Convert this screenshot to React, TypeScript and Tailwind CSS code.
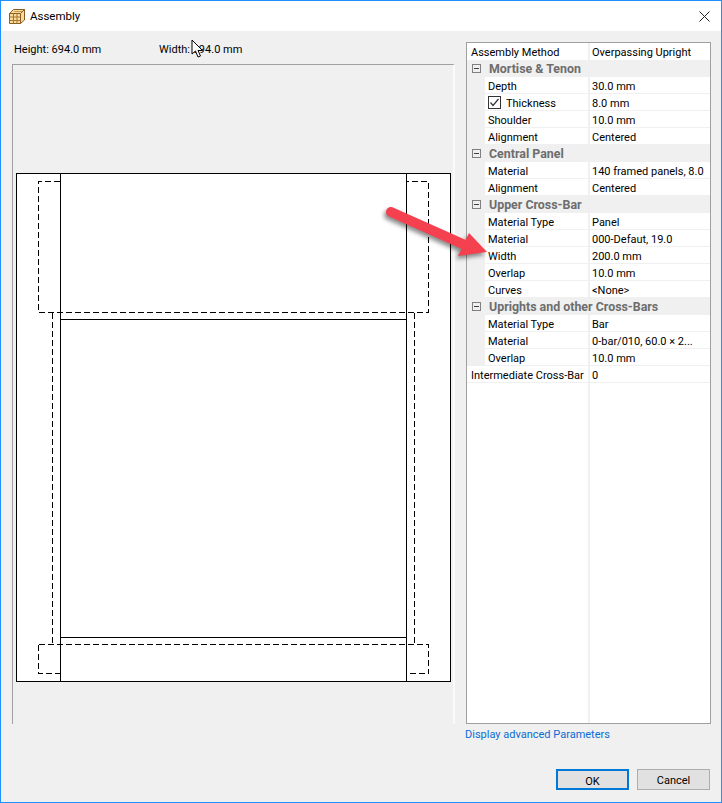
type Row = { label: string; value: string; check?: boolean };
type Section = { title: string; rows: Row[] };

const SECTIONS: Section[] = [
  {
    title: "Mortise & Tenon",
    rows: [
      { label: "Depth", value: "30.0 mm" },
      { label: "Thickness", value: "8.0 mm", check: true },
      { label: "Shoulder", value: "10.0 mm" },
      { label: "Alignment", value: "Centered" },
    ],
  },
  {
    title: "Central Panel",
    rows: [
      { label: "Material", value: "140 framed panels, 8.0" },
      { label: "Alignment", value: "Centered" },
    ],
  },
  {
    title: "Upper Cross-Bar",
    rows: [
      { label: "Material Type", value: "Panel" },
      { label: "Material", value: "000-Defaut, 19.0" },
      { label: "Width", value: "200.0 mm" },
      { label: "Overlap", value: "10.0 mm" },
      { label: "Curves", value: "<None>" },
    ],
  },
  {
    title: "Uprights and other Cross-Bars",
    rows: [
      { label: "Material Type", value: "Bar" },
      { label: "Material", value: "0-bar/010, 60.0 × 2..." },
      { label: "Overlap", value: "10.0 mm" },
    ],
  },
];

function AppIcon() {
  return (
    <svg width="16" height="17" viewBox="0 0 16 17" className="shrink-0">
      <path d="M0.5 5.5 L4.5 1.5 H15.5 V12 L11.5 15.5 H0.5 Z" fill="#f7dc9e" stroke="#8a5a20" />
      <path d="M0.5 5.5 H11.5 V15.5 M11.5 5.5 L15.5 1.5" fill="none" stroke="#8a5a20" />
      <path d="M0.5 9 H11.5 M0.5 12.5 H11.5 M4.5 5.5 V15.5 M8 5.5 V15.5" fill="none" stroke="#a8742e" />
      <path d="M5 3.5 H13" fill="none" stroke="#c99a50" />
    </svg>
  );
}

function Drawing() {
  const dash = "6 3";
  return (
    <svg width="441" height="520" viewBox="0 0 441 520" className="block" shapeRendering="crispEdges">
      <rect x="0.5" y="0.5" width="434" height="508" fill="#ffffff" stroke="#000000" />
      <g fill="none" stroke="#000000" strokeDasharray={dash}>
        <path d="M44 8.5 H22.5 V139.5 H412.5 V8.5 H391" />
        <path d="M22.5 471.5 V500.5 H44" />
        <path d="M22.5 471.5 H412.5 V500.5 H391" />
        <path d="M36.5 140 V471" />
        <path d="M398.5 140 V471" />
      </g>
      <g fill="none" stroke="#000000">
        <path d="M44.5 0 V509" />
        <path d="M390.5 0 V509" />
        <path d="M44 146.5 H391" />
        <path d="M44 464.5 H391" />
      </g>
    </svg>
  );
}

function GridRow({ label, value, check }: Row) {
  return (
    <div className="flex h-[17px] bg-[#f0f0f0]">
      <div className="w-[18px] shrink-0" />
      <div className="flex h-[16px] w-[103px] shrink-0 items-center bg-white pl-[3px]">
        {check && (
          <span className="mr-[5px] flex h-[13px] w-[13px] items-center justify-center border border-[#333333]">
            <svg width="11" height="11" viewBox="0 0 11 11">
              <path d="M1.5 5.5 L4 8.5 L9.5 2" fill="none" stroke="#333333" strokeWidth="1.2" />
            </svg>
          </span>
        )}
        <span className="pt-[4px]">{label}</span>
      </div>
      <div className="ml-[2px] h-[16px] flex-1 truncate bg-white pl-[2px] pt-[2px]">{value}</div>
    </div>
  );
}

export default function App() {
  return (
    <div
      className="flex h-[803px] w-[722px] flex-col overflow-hidden border border-[#1e90ff] bg-[#f0f0f0] text-[11px] leading-[16px] text-black"
      style={{ fontFamily: 'Roboto, "Noto Sans", sans-serif' }}
    >
      <div className="flex h-[30px] shrink-0 items-center bg-white pl-[8px] pr-[11px]">
        <AppIcon />
        <span className="ml-[5px] flex-1 text-[11.5px]">Assembly</span>
        <svg width="11" height="11" viewBox="0 0 11 11">
          <path d="M0.5 0.5 L10.5 10.5 M10.5 0.5 L0.5 10.5" stroke="#222222" fill="none" />
        </svg>
      </div>

      <div className="relative flex flex-1 pl-[11px] pr-[11px]">
        <div className="flex w-[443px] shrink-0 flex-col">
          <div className="flex h-[33px] items-center pl-[2px] pt-[5px]">
            <span className="w-[145px]">Height: 694.0 mm</span>
            <span>Width: 694.0 mm</span>
          </div>
          <div className="h-[660px] border-t border-l border-[#a0a0a0] border-r-2 border-r-[#fafafa] pl-[3px] pt-[108px]">
            <Drawing />
          </div>
        </div>

        <div className="ml-[11px] flex w-[245px] shrink-0 flex-col pt-[11px]">
          <div className="relative h-[682px] border border-[#a0a0a0] bg-white">
            <div className="absolute top-0 bottom-0 left-[121px] w-[2px] bg-[#f0f0f0]" />
            <div className="relative">
              <div className="flex h-[17px] pt-[2px]">
                <div className="w-[121px] shrink-0 pl-[4px]">Assembly Method</div>
                <div className="pl-[4px]">Overpassing Upright</div>
              </div>
              {SECTIONS.map((s) => (
                <div key={s.title}>
                  <div className="flex h-[17px] items-center bg-[#f0f0f0]">
                    <span className="ml-[5px] flex h-[9px] w-[9px] items-center justify-center border border-[#808080]">
                      <span className="h-px w-[5px] bg-[#404040]" />
                    </span>
                    <span className="ml-[8px] pt-[1px] text-[12.4px] font-bold text-[#6d6d6d]">{s.title}</span>
                  </div>
                  {s.rows.map((r) => (
                    <GridRow key={r.label + r.value} {...r} />
                  ))}
                </div>
              ))}
              <div className="flex h-[17px] border-b border-[#f0f0f0] pt-[2px]">
                <div className="w-[121px] shrink-0 truncate pl-[4px]">Intermediate Cross-Bar</div>
                <div className="pl-[4px]">0</div>
              </div>
            </div>
          </div>
          <a className="mt-[3px] -ml-px text-[#0a6cd6]">Display advanced Parameters</a>
          <div className="mt-[26px] flex justify-end gap-[8px] pr-[1px]">
            <button className="h-[21px] w-[73px] border-2 border-[#0078d7] bg-[#e1e1e1] pt-[3px]">OK</button>
            <button className="h-[21px] w-[73px] border border-[#adadad] bg-[#e1e1e1] pt-[3px]">Cancel</button>
          </div>
        </div>

        <svg width="120" height="70" viewBox="0 0 120 70" className="pointer-events-none absolute top-[170px] left-[380px]" style={{ filter: "drop-shadow(-2px 3px 2px rgba(0,0,0,0.45))" }}>
          <path d="M10 11 L84 44" stroke="#f5414f" strokeWidth="10" strokeLinecap="round" fill="none" />
          <path d="M88 32 L106 51 L77 55 Z" fill="#f5414f" />
        </svg>

        <svg width="14" height="20" viewBox="0 0 14 20" className="pointer-events-none absolute top-[8px] left-[190px]">
          <path d="M1 1 V15 L4.5 12 L7 18 L9.5 17 L7 11.5 L11.5 11.5 Z" fill="#ffffff" stroke="#000000" />
        </svg>
      </div>
    </div>
  );
}
